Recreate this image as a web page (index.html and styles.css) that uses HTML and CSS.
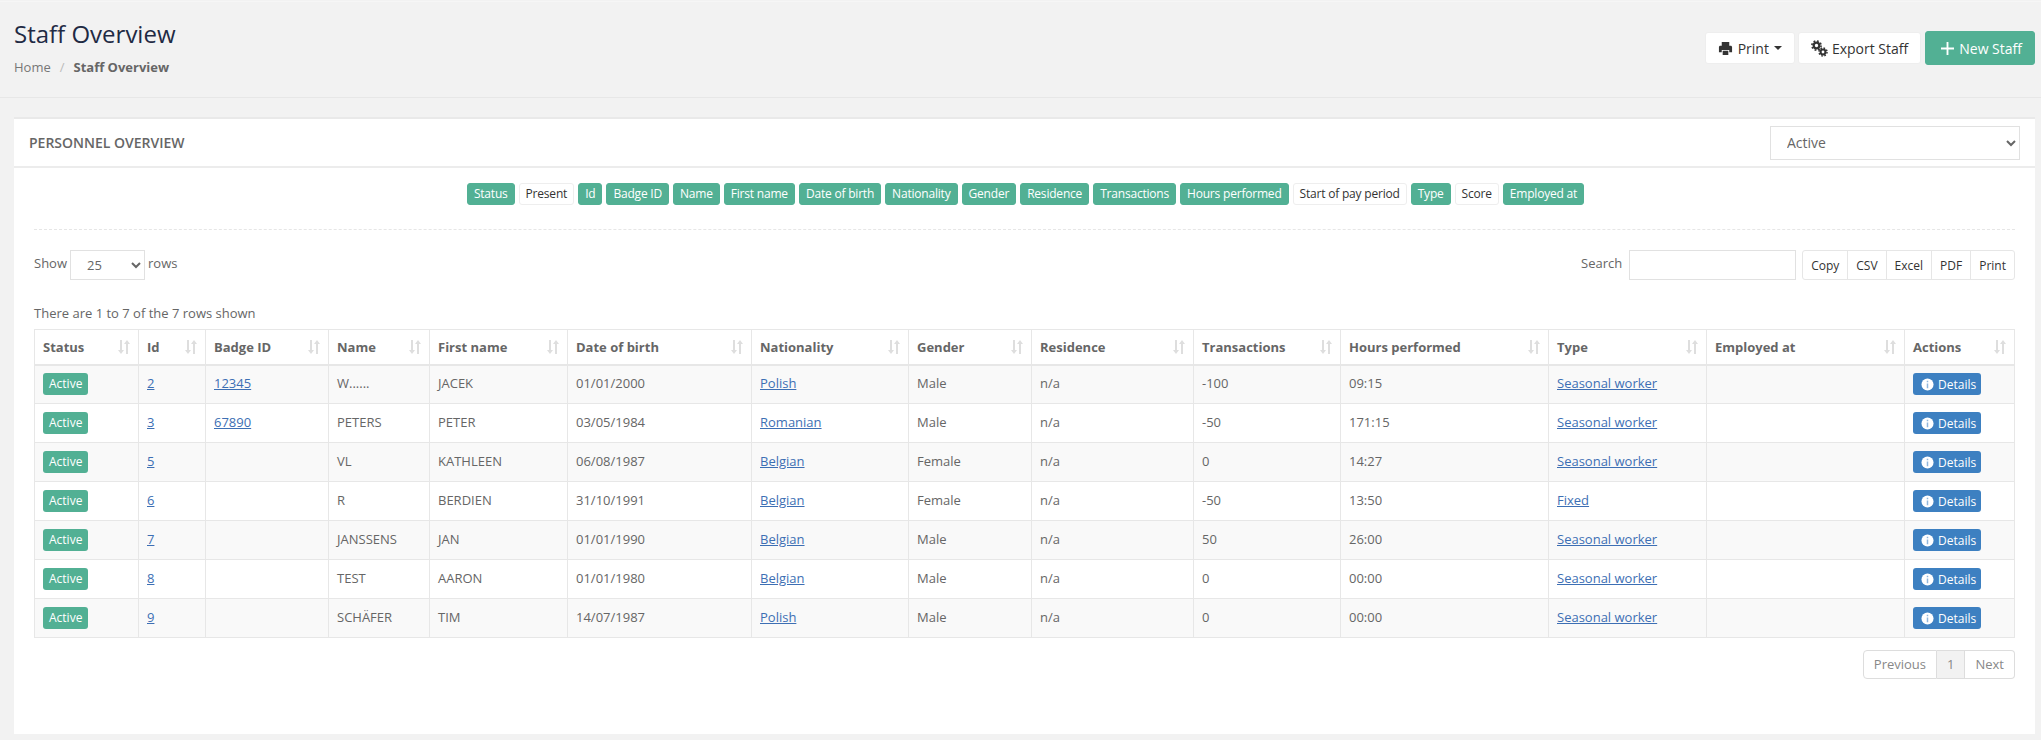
FILE: index.html
```html
<!DOCTYPE html>
<html lang="en">
<head>
    <meta charset="UTF-8">
    <title>Staff Overview</title>
    <link rel="stylesheet" href="styles.css">
</head>
<body>
    <div class="page-bar">
        <div>
            <h1>Staff Overview</h1>
            <div class="crumbs"><span>Home</span><i>/</i><b>Staff Overview</b></div>
        </div>
        <div class="top-actions">
            <button class="btn">
                <svg class="ico" viewBox="0 0 16 16"><path d="M4 1h8v4H4zM1 6.500C1 5.700 1.700 5 2.500 5h11c.8 0 1.500.7 1.500 1.500V12h-3V9.500H4V12H1zM5 10.500h6V15H5z" fill="#333"/></svg>
                Print <span class="caret"></span>
            </button>
            <button class="btn btn-export">
                <svg class="ico-gears" viewBox="0 0 17 17"><circle cx="5.500" cy="5.500" r="2.800" fill="none" stroke="#333" stroke-width="2.200"/><circle cx="5.500" cy="5.500" r="4.600" fill="none" stroke="#333" stroke-width="1.600" stroke-dasharray="1.800 1.810"/><circle cx="12" cy="12" r="2.400" fill="none" stroke="#333" stroke-width="2"/><circle cx="12" cy="12" r="4" fill="none" stroke="#333" stroke-width="1.500" stroke-dasharray="1.600 1.550"/></svg>
                Export Staff
            </button>
            <button class="btn btn-green">
                <svg class="ico-plus" viewBox="0 0 14 14"><path d="M7 0v14M0 7h14" stroke="#fff" stroke-width="2"/></svg>
                New Staff
            </button>
        </div>
    </div>

    <div class="card">
        <div class="card-head">
            <span class="card-title">PERSONNEL OVERVIEW</span>
            <select class="status-select"><option>Active</option></select>
        </div>
        <div class="card-body">
            <div class="tags">
                <span class="tag on">Status</span>
                <span class="tag">Present</span>
                <span class="tag on">Id</span>
                <span class="tag on">Badge ID</span>
                <span class="tag on">Name</span>
                <span class="tag on">First name</span>
                <span class="tag on">Date of birth</span>
                <span class="tag on">Nationality</span>
                <span class="tag on">Gender</span>
                <span class="tag on">Residence</span>
                <span class="tag on">Transactions</span>
                <span class="tag on">Hours performed</span>
                <span class="tag">Start of pay period</span>
                <span class="tag on">Type</span>
                <span class="tag">Score</span>
                <span class="tag on">Employed at</span>
            </div>

            <div class="tools">
                <div class="show">Show
                    <select class="rows-select"><option>25</option></select>
                    rows
                </div>
                <div class="tools-right">
                    <label class="search">Search <input type="text"></label>
                    <div class="export">
                        <span>Copy</span><span>CSV</span><span>Excel</span><span>PDF</span><span>Print</span>
                    </div>
                </div>
            </div>

            <p class="info">There are 1 to 7 of the 7 rows shown</p>

            <table id="staff">
                <colgroup>
                    <col class="c1"><col class="c2"><col class="c3"><col class="c4"><col class="c5"><col class="c6"><col class="c7"><col class="c8"><col class="c9"><col class="c10"><col class="c11"><col class="c12"><col class="c13"><col class="c14">
                </colgroup>
                <thead>
                    <tr>
                        <th>Status</th><th>Id</th><th>Badge ID</th><th>Name</th><th>First name</th><th>Date of birth</th><th>Nationality</th><th>Gender</th><th>Residence</th><th>Transactions</th><th>Hours performed</th><th>Type</th><th>Employed at</th><th>Actions</th>
                    </tr>
                </thead>
                <tbody></tbody>
            </table>

            <div class="pager">
                <span>Previous</span><span class="current">1</span><span>Next</span>
            </div>
        </div>
    </div>

    <script>
        const rows = [
            ['2', '12345', 'W......', 'JACEK', '01/01/2000', 'Polish', 'Male', '-100', '09:15', 'Seasonal worker'],
            ['3', '67890', 'PETERS', 'PETER', '03/05/1984', 'Romanian', 'Male', '-50', '171:15', 'Seasonal worker'],
            ['5', '', 'VL', 'KATHLEEN', '06/08/1987', 'Belgian', 'Female', '0', '14:27', 'Seasonal worker'],
            ['6', '', 'R', 'BERDIEN', '31/10/1991', 'Belgian', 'Female', '-50', '13:50', 'Fixed'],
            ['7', '', 'JANSSENS', 'JAN', '01/01/1990', 'Belgian', 'Male', '50', '26:00', 'Seasonal worker'],
            ['8', '', 'TEST', 'AARON', '01/01/1980', 'Belgian', 'Male', '0', '00:00', 'Seasonal worker'],
            ['9', '', 'SCHÄFER', 'TIM', '14/07/1987', 'Polish', 'Male', '0', '00:00', 'Seasonal worker']
        ];

        const sortIcon = '<svg class="sort" viewBox="0 0 12 14"><path d="M2 0h2v10h2l-3 4-3-4h2zM8 14h2V4h2L9 0 6 4h2z" fill="#dedede"/></svg>';
        const infoIcon = '<svg class="info-ico" viewBox="0 0 14 14"><circle cx="7" cy="7" r="6.500" fill="#fff"/><path d="M6.200 3h1.600v1.600H6.200zM6.200 6h1.600v5H6.200z" fill="#8fb6dc"/></svg>';

        document.querySelectorAll('#staff th').forEach(th => {
            th.innerHTML = '<div class="th-in"><span>' + th.textContent + '</span>' + sortIcon + '</div>';
        });

        const link = v => v ? `<a href="#">${v}</a>` : '';
        document.querySelector('#staff tbody').innerHTML = rows.map(r => `<tr>
            <td><span class="badge">Active</span></td>
            <td>${link(r[0])}</td><td>${link(r[1])}</td><td>${r[2]}</td><td>${r[3]}</td><td>${r[4]}</td>
            <td>${link(r[5])}</td><td>${r[6]}</td><td>n/a</td><td>${r[7]}</td><td>${r[8]}</td>
            <td>${link(r[9])}</td><td></td>
            <td><span class="details">${infoIcon}Details</span></td>
        </tr>`).join('');
    </script>
</body>
</html>
```

FILE: styles.css
```css
* {
    box-sizing: border-box;
}

body {
    margin: 0;
    background-color: #f2f2f2;
    font-family: 'Open Sans', sans-serif;
    font-size: 13px;
    color: #666;
    height: 740px;
    overflow: hidden;
}

.page-bar {
    height: 97px;
    margin-top: 1px;
    padding: 12px 6px 0 14px;
    border-bottom: 1px solid #e7e7e7;
    border-top: 1px solid #f6f6f6;
    display: flex;
    justify-content: space-between;
}

h1 {
    margin: 3px 0 0;
    font-size: 24px;
    font-weight: 400;
    line-height: 33px;
    color: #1f2a44;
}

.crumbs {
    margin-top: 8px;
    font-size: 13px;
    line-height: 18px;
}

.crumbs span {
    color: #777;
}

.crumbs i {
    font-style: normal;
    color: #bbb;
    margin: 0 9px;
}

.crumbs b {
    font-weight: 700;
}

.top-actions {
    display: flex;
    gap: 3px;
    height: 34px;
    margin-top: 17px;
    align-items: center;
}

.btn {
    height: 32px;
    padding: 0 12px;
    background-color: #fff;
    border: 1px solid #eee;
    border-radius: 3px;
    font-family: inherit;
    font-size: 14px;
    color: #333;
    display: flex;
    align-items: center;
    gap: 5px;
}

.btn-export {
    gap: 4px;
}

.btn-green {
    height: 34px;
    margin-left: 1px;
    padding: 0 12px 0 15px;
    background-color: #52b094;
    border-color: #52b094;
    color: #fff;
}

.ico {
    width: 15px;
    height: 15px;
}

.ico-gears {
    width: 17px;
    height: 17px;
}

.ico-plus {
    width: 13px;
    height: 13px;
}

.caret {
    width: 0;
    height: 0;
    border-left: 4px solid transparent;
    border-right: 4px solid transparent;
    border-top: 4px solid #333;
}

.card {
    margin: 19px 6px 0 14px;
    background-color: #fff;
    border-top: 2px solid #e9e9e9;
    height: 617px;
}

.card-head {
    height: 49px;
    padding: 0 15px 0 15px;
    border-bottom: 2px solid #ececec;
    display: flex;
    justify-content: space-between;
    align-items: center;
}

.card-title {
    font-size: 14px;
    font-weight: 600;
    color: #666;
}

.status-select {
    width: 250px;
    height: 34px;
    padding-left: 12px;
    background-color: #fff;
    border: 1px solid #e1e1e1;
    font-family: inherit;
    font-size: 14px;
    color: #666;
}

.card-body {
    padding: 15px 20px 0 20px;
}

.tags {
    display: flex;
    justify-content: center;
    gap: 4px;
    padding: 0 0 24px 2px;
    border-bottom: 1px dashed #e6e6e6;
}

.tag {
    height: 22px;
    padding: 0 6px;
    line-height: 20px;
    font-size: 12px;
    letter-spacing: -0.2px;
    color: #333;
    background-color: #fff;
    border: 1px solid #eee;
    border-radius: 3px;
    white-space: nowrap;
}

.tag.on {
    background-color: #52b094;
    border-color: #52b094;
    color: #fff;
}

.tools {
    display: flex;
    justify-content: space-between;
    align-items: flex-start;
    margin-top: 20px;
}

.show {
    display: flex;
    align-items: flex-start;
    gap: 3px;
    height: 30px;
    line-height: 27px;
}

.rows-select {
    width: 75px;
    height: 30px;
    padding-left: 12px;
    background-color: #fff;
    border: 1px solid #e1e1e1;
    font-family: inherit;
    font-size: 13px;
    color: #666;
}

.tools-right {
    display: flex;
    gap: 6px;
}

.search {
    display: flex;
    align-items: flex-start;
    gap: 7px;
    line-height: 27px;
}

.search input {
    width: 167px;
    height: 30px;
    border: 1px solid #e1e1e1;
}

.export {
    display: flex;
    height: 30px;
    border: 1px solid #e6e6e6;
    border-radius: 3px;
}

.export span {
    padding: 0 8px;
    line-height: 30px;
    font-size: 12px;
    color: #333;
    border-left: 1px solid #e6e6e6;
}

.export span:first-child {
    border-left: none;
}

.info {
    margin: 24px 0 7px;
    line-height: 18px;
}

table {
    width: 1981px;
    table-layout: fixed;
    border-collapse: collapse;
}

.c1 { width: 104px; }
.c2 { width: 67px; }
.c3 { width: 123px; }
.c4 { width: 101px; }
.c5 { width: 138px; }
.c6 { width: 184px; }
.c7 { width: 157px; }
.c8 { width: 123px; }
.c9 { width: 162px; }
.c10 { width: 147px; }
.c11 { width: 208px; }
.c12 { width: 158px; }
.c13 { width: 198px; }
.c14 { width: 110px; }

th, td {
    border: 1px solid #e7e7e7;
    padding: 0 8px;
    text-align: left;
}

th {
    height: 35px;
    border-bottom-width: 2px;
    font-weight: 700;
}

td {
    height: 39px;
    padding-bottom: 2px;
}

tbody tr:nth-child(odd) {
    background-color: #f9f9f9;
}

.th-in {
    display: flex;
    justify-content: space-between;
    align-items: center;
}

.sort {
    width: 12px;
    height: 14px;
}

a {
    color: #3d6fb4;
}

.badge {
    display: inline-block;
    height: 22px;
    margin-top: 2px;
    padding: 0 6px;
    line-height: 22px;
    font-size: 12px;
    color: #fff;
    background-color: #52b094;
    border-radius: 3px;
    vertical-align: middle;
}

.details {
    display: inline-flex;
    align-items: center;
    gap: 4px;
    height: 22px;
    margin-top: 2px;
    padding: 0 5px 0 8px;
    font-size: 12px;
    color: #fff;
    background-color: #3d80c1;
    border-radius: 3px;
    vertical-align: middle;
}

.info-ico {
    width: 13px;
    height: 13px;
}

.pager {
    display: flex;
    justify-content: flex-end;
    margin-top: 12px;
}

.pager span {
    height: 29px;
    padding: 0 10px;
    line-height: 27px;
    color: #888;
    border: 1px solid #ddd;
    border-left: none;
}

.pager span:first-child {
    border-left: 1px solid #ddd;
    border-radius: 4px 0 0 4px;
}

.pager span:last-child {
    border-radius: 0 4px 4px 0;
}

.pager .current {
    background-color: #f2f2f2;
}
```
